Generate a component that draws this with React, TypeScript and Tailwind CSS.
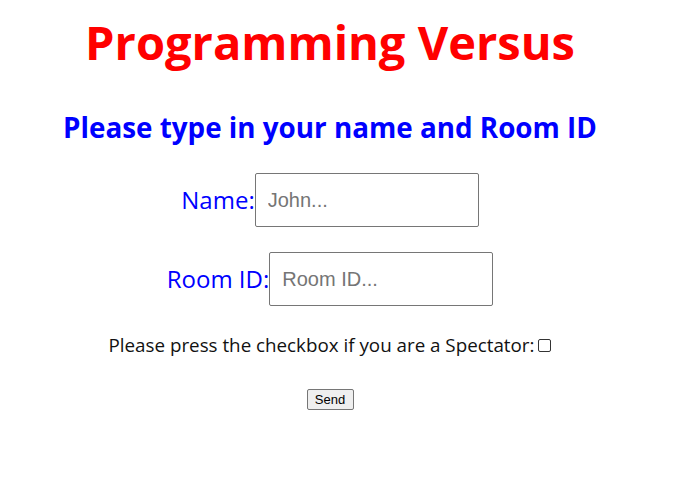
export default function App() {
  return (
    <div className="w-[660px] bg-white text-center">
      <div className="pt-[12px]">
        <h1 className="text-[47px] leading-[60px] font-bold text-[#ff0000] [font-family:'Open_Sans',sans-serif]">
          Programming Versus
        </h1>
      </div>
      <h2 className="mt-[37px] text-[27.8px] leading-[36px] font-bold text-[#0000ff] [font-family:'Open_Sans',sans-serif]">
        Please type in your name and Room ID
      </h2>
      <div className="mt-[28px] flex items-center justify-center">
        <label className="text-[24px] text-[#0000ff] [font-family:'Open_Sans',sans-serif]">Name:</label>
        <input
          placeholder="John..."
          className="w-[224px] h-[54px] border border-[#767676] rounded-[2px] px-[12px] text-[20px] [font-family:'Liberation_Sans',Arial,sans-serif] placeholder:text-[#757575]"
        />
      </div>
      <div className="mt-[25px] flex items-center justify-center">
        <label className="text-[24px] text-[#0000ff] [font-family:'Open_Sans',sans-serif]">Room ID:</label>
        <input
          placeholder="Room ID..."
          className="w-[224px] h-[54px] border border-[#767676] rounded-[2px] px-[12px] text-[20px] [font-family:'Liberation_Sans',Arial,sans-serif] placeholder:text-[#757575]"
        />
      </div>
      <div className="mt-[26px] flex items-center justify-center text-[18.8px] leading-[26px] text-[#111] [font-family:'Open_Sans',sans-serif]">
        <span>Please press the checkbox if you are a Spectator:</span>
        <span className="ml-[4px] inline-block w-[13px] h-[13px] border border-[#333] rounded-[2px]" />
      </div>
      <div className="mt-[31px] flex justify-center">
        <button className="h-[21px] w-[47px] border border-[#767676] rounded-[2px] bg-[#efefef] text-[13px] leading-none text-black [font-family:'Liberation_Sans',Arial,sans-serif]">
          Send
        </button>
      </div>
    </div>
  );
}
